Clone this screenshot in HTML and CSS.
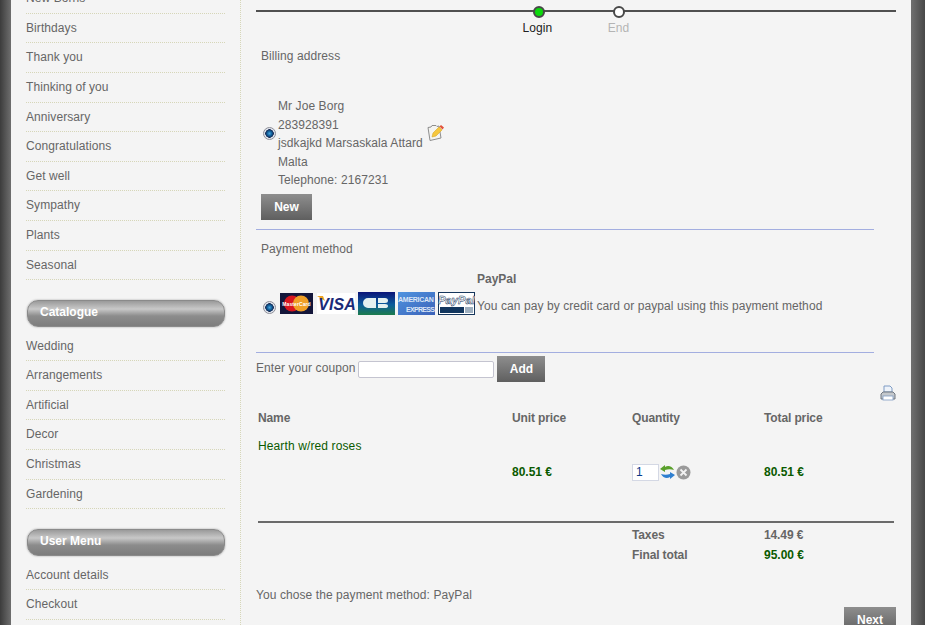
FILE: index.html
```html
<!DOCTYPE html>
<html lang="en">
<head>
<meta charset="UTF-8">
<meta name="viewport" content="width=device-width, initial-scale=1.0">
<title>Checkout</title>
<link rel="stylesheet" href="styles.css">
</head>
<body>

<div class="page">
  <div class="sidebar">
    <ul class="menu menu-first">
      <li>New Borns</li>
      <li>Birthdays</li>
      <li>Thank you</li>
      <li>Thinking of you</li>
      <li>Anniversary</li>
      <li>Congratulations</li>
      <li>Get well</li>
      <li>Sympathy</li>
      <li>Plants</li>
      <li>Seasonal</li>
    </ul>
    <div class="menu-title">Catalogue</div>
    <ul class="menu">
      <li>Wedding</li>
      <li>Arrangements</li>
      <li>Artificial</li>
      <li>Decor</li>
      <li>Christmas</li>
      <li>Gardening</li>
    </ul>
    <div class="menu-title">User Menu</div>
    <ul class="menu">
      <li>Account details</li>
      <li>Checkout</li>
    </ul>
  </div>

  <div class="main">
    <div class="steps">
      <div class="step step-done"><span class="dot"></span><span class="step-label">Login</span></div>
      <div class="step step-todo"><span class="dot"></span><span class="step-label">End</span></div>
    </div>

    <div class="section-title">Billing address</div>
    <div class="address-row">
      <span class="radio radio-address"></span>
      <div class="address">
        <div>Mr Joe Borg</div>
        <div>283928391</div>
        <div>jsdkajkd Marsaskala Attard</div>
        <div>Malta</div>
        <div>Telephone: 2167231</div>
      </div>
      <svg class="edit-icon" width="17" height="17" viewBox="0 0 17 17">
        <path d="M1 3.500l3-.5 1-1.500h4l1 1 2-.5 2 12-11 2.500z" fill="#f4f4f0" stroke="#8d8d8d"/>
        <path d="M5 13l1-4 6-6 3 3-6 6z" fill="#f6c73c" stroke="#d8a828" stroke-width=".6"/>
        <path d="M12.500 2.500l1.500-1.500 3 2.500-1.500 2z" fill="#e2533a"/>
      </svg>
    </div>
    <button class="btn btn-new">New</button>

    <div class="section-title section-payment">Payment method</div>
    <div class="payment-row">
      <span class="radio"></span>
      <div class="cards">
        <svg class="card card-first" width="33" height="21" viewBox="0 0 33 21">
          <rect width="33" height="21" fill="#14163a"/>
          <circle cx="12" cy="10.500" r="8" fill="#d8161f"/>
          <circle cx="21" cy="10.500" r="8" fill="#f0a026"/>
          <text x="16.500" y="12.500" class="card-mc">MasterCard</text>
        </svg>
        <svg class="card" width="38" height="21" viewBox="0 0 38 21">
          <rect width="38" height="21" fill="#fff"/>
          <path d="M0 3h6l2 5z" fill="#eea324"/>
          <text x="20" y="17" class="card-visa">VISA</text>
        </svg>
        <svg class="card" width="37" height="23" viewBox="0 0 37 23">
          <defs>
            <linearGradient id="cb-bg" x1="0" y1="0" x2="0" y2="1">
              <stop offset="0" stop-color="#0a1478"/>
              <stop offset=".55" stop-color="#0c5c9c"/>
              <stop offset="1" stop-color="#1c7c4c"/>
            </linearGradient>
          </defs>
          <rect width="37" height="23" fill="url(#cb-bg)"/>
          <path d="M18 6h-8a5 5 0 0 0 0 10h8zM20 6h7a3 2.500 0 0 1 0 5h-7zM20 12h7a3 2 0 0 1 0 4h-7z" fill="#e4f0f0"/>
        </svg>
        <svg class="card" width="37" height="23" viewBox="0 0 37 23">
          <defs>
            <linearGradient id="amex-bg" x1="0" y1="0" x2="1" y2="1">
              <stop offset="0" stop-color="#4f94e0"/>
              <stop offset="1" stop-color="#3c62b8"/>
            </linearGradient>
          </defs>
          <rect width="37" height="23" fill="url(#amex-bg)"/>
          <text x="0" y="10" class="card-amex" textLength="36">AMERICAN</text>
          <text x="8" y="20" class="card-amex" textLength="29">EXPRESS</text>
        </svg>
        <svg class="card" width="37" height="23" viewBox="0 0 37 23">
          <rect x=".5" y=".5" width="36" height="22" fill="#fff" stroke="#16365c"/>
          <text x="18.500" y="12" class="card-paypal">PayPal</text>
          <rect x="2" y="15" width="24" height="6" fill="#12365e"/>
          <rect x="27" y="15" width="8" height="6" fill="#9fb0c0"/>
        </svg>
      </div>
      <div class="payment-text">
        <div class="payment-name">PayPal</div>
        <div class="payment-desc">You can pay by credit card or paypal using this payment method</div>
      </div>
    </div>

    <form class="coupon">
      <label class="coupon-label" for="coupon">Enter your coupon</label>
      <input class="coupon-input" id="coupon" type="text">
      <button class="btn btn-add" type="button">Add</button>
    </form>

    <div class="print-row">
      <svg width="16" height="16" viewBox="0 0 16 16">
        <path d="M4 7V1h6l2 2v4z" fill="#eef3fa" stroke="#7f9cc4"/>
        <path d="M1 14V9l2-2h10l2 2v5z" fill="#c4c8cc" stroke="#6f7680"/>
        <rect x="3" y="11" width="10" height="4" fill="#fff" stroke="#7f9cc4" stroke-width=".8"/>
      </svg>
    </div>

    <div class="cart">
      <div class="cart-row cart-head">
        <div>Name</div>
        <div>Unit price</div>
        <div>Quantity</div>
        <div>Total price</div>
      </div>
      <div class="product-name">Hearth w/red roses</div>
      <div class="cart-row cart-item">
        <div></div>
        <div class="price">80.51 €</div>
        <div class="qty">
          <input class="qty-input" type="text" value="1">
          <svg width="15" height="16" viewBox="0 0 15 16">
            <path d="M14 6C12 2 8 1 5 3V1L0 5l5 3V6c3-1 6-1 9 0z" fill="#5aa02c"/>
            <path d="M1 10c2 4 6 5 9 3v2l5-4-5-3v2c-3 1-6 1-9 0z" fill="#2f7fd0"/>
          </svg>
          <svg width="15" height="15" viewBox="0 0 15 15">
            <circle cx="7.500" cy="7.500" r="7" fill="#9a9a9a"/>
            <path d="M4.500 4.500l6 6M10.500 4.500l-6 6" stroke="#f2f2f2" stroke-width="1.800"/>
          </svg>
        </div>
        <div class="price">80.51 €</div>
      </div>
      <div class="cart-totals">
        <div class="cart-row total-row">
          <div></div>
          <div></div>
          <div class="total-label">Taxes</div>
          <div class="total-label">14.49 €</div>
        </div>
        <div class="cart-row total-row">
          <div></div>
          <div></div>
          <div class="total-label">Final total</div>
          <div class="price">95.00 €</div>
        </div>
      </div>
    </div>

    <div class="chosen">You chose the payment method: PayPal</div>
    <div class="next-row"><button class="btn btn-next">Next</button></div>
  </div>
</div>

</body>
</html>
```

FILE: styles.css
```css
html, body {
  margin: 0;
  height: 625px;
  overflow: hidden;
}

body {
  background: linear-gradient(to right, #3c3c3c 0, #6e6e6e 11px, #6e6e6e 911px, #6e6e6e 912px, #484848 925px);
  font-family: "Liberation Sans", Arial, sans-serif;
  font-size: 12px;
  letter-spacing: .08px;
  color: #666;
}

.page {
  display: flex;
  width: 900px;
  height: 625px;
  margin-left: 11px;
  background: #f4f4f4;
  overflow: hidden;
}

/* left column */
.sidebar {
  width: 230px;
  height: 625px;
  flex: none;
  padding-left: 15px;
  box-sizing: border-box;
  border-right: 1px dotted #d6d6b8;
  overflow: hidden;
}

.menu {
  list-style: none;
  margin: 0;
  padding: 0;
  width: 199px;
}

.menu-first {
  margin-top: -15.800px;
}

.menu li {
  height: 28.600px;
  line-height: 29px;
  border-bottom: 1px dotted #d6d6b8;
}

.menu-title {
  width: 198px;
  height: 27px;
  margin: 20px 0 4.500px 1px;
  padding-left: 12px;
  box-sizing: border-box;
  border: 1px solid #8a8a8a;
  border-radius: 11px;
  background: linear-gradient(to bottom, #9a9a9a 0, #c8c8c8 8px, #8c8c8c 15px, #7d7d7d 100%);
  box-shadow: 0 0 2px #999;
  font-weight: bold;
  line-height: 22px;
  letter-spacing: 0;
  color: #fff;
}

/* right column */
.main {
  width: 640px;
  margin-left: 15px;
  flex: none;
}

.steps {
  display: flex;
  height: 49px;
  padding-left: 241px;
  box-sizing: border-box;
  background: linear-gradient(#505050, #505050) 0 10px / 100% 2px no-repeat;
}

.step {
  width: 81px;
  display: flex;
  flex-direction: column;
  align-items: center;
  padding-top: 6px;
  box-sizing: border-box;
}

.dot {
  width: 8px;
  height: 8px;
  border: 2px solid #484848;
  border-radius: 50%;
}

.step-done .dot {
  margin-left: 3px;
  background: #0cd80c;
}

.step-todo .dot {
  background: #fff;
}

.step-label {
  margin-top: 3px;
  line-height: 15px;
}

.step-done .step-label {
  color: #222;
}

.step-todo .step-label {
  color: #b4b4b4;
}

.section-title {
  margin-left: 5px;
  line-height: 14px;
}

.address-row {
  display: flex;
  align-items: center;
  margin: 34px 0 0 7px;
}

.radio {
  width: 11px;
  height: 11px;
  flex: none;
  border: 1px solid #8f8f98;
  border-radius: 50%;
  background: radial-gradient(circle, #4aa4e0 0, #0c5a94 2.500px, #1c2c54 4px, #e0e6ee 4.500px, #e0e6ee 100%);
}

.radio-address {
  margin-bottom: 20px;
}

.address {
  margin-left: 2px;
  line-height: 18.500px;
}

.edit-icon {
  margin: 0 0 22px 4px;
}

.btn {
  border: 0;
  padding: 0;
  background: linear-gradient(to bottom, #8e8e8e, #5f5f5f);
  font-family: "Liberation Sans", Arial, sans-serif;
  font-size: 12px;
  font-weight: bold;
  color: #fff;
}

.btn-new {
  display: block;
  width: 51px;
  height: 26px;
  margin: 4.500px 0 0 5px;
}

.section-payment {
  width: 618px;
  margin-left: 0;
  margin-top: 9px;
  padding: 12px 0 0 5px;
  box-sizing: border-box;
  height: 27px;
  border-top: 1px solid #a3aee0;
}

.payment-row {
  display: flex;
  align-items: center;
  height: 84px;
  margin: 0 0 0 7px;
  padding-top: 18px;
  box-sizing: border-box;
}

.cards {
  display: flex;
  align-items: center;
  gap: 3px;
  margin: -8px 2px 0 4px;
}

.card {
  display: block;
}

.card-first {
  margin-right: 1px;
}

.card-mc {
  font-size: 5px;
  font-weight: bold;
  font-family: "Liberation Sans", Arial, sans-serif;
  fill: #fff;
  text-anchor: middle;
}

.card-visa {
  font-size: 16px;
  font-weight: bold;
  font-style: italic;
  font-family: "Liberation Sans", Arial, sans-serif;
  fill: #1a2a78;
  text-anchor: middle;
}

.card-amex {
  font-size: 7px;
  font-weight: bold;
  font-family: "Liberation Sans", Arial, sans-serif;
  fill: #dbe6f6;
}

.card-paypal {
  font-size: 11px;
  font-weight: bold;
  font-style: italic;
  font-family: "Liberation Sans", Arial, sans-serif;
  fill: #fff;
  stroke: #16365c;
  stroke-width: .5px;
  text-anchor: middle;
}

.payment-text {
  margin-top: -29px;
}

.payment-name {
  font-weight: bold;
  line-height: 14px;
  letter-spacing: 0;
  margin-bottom: 13px;
}

.payment-desc {
  line-height: 14px;
}

.coupon {
  display: flex;
  align-items: center;
  width: 618px;
  height: 34px;
  margin: 12px 0 0;
  box-sizing: border-box;
  border-top: 1px solid #a3aee0;
}

.coupon-label {
  margin: -3px 3px 0 0;
}

.coupon-input {
  width: 136px;
  height: 17px;
  padding: 0;
  box-sizing: border-box;
  border: 1px solid #c4c4d0;
  border-radius: 2px;
  background: #fff;
}

.btn-add {
  width: 48px;
  height: 26px;
  margin: -2px 0 0 3px;
}

.print-row {
  display: flex;
  justify-content: flex-end;
  height: 16px;
  margin-top: -1px;
}

.cart {
  width: 636px;
  margin-left: 2px;
}

.cart-row {
  display: grid;
  grid-template-columns: 254px 120px 132px 1fr;
}

.cart-head {
  margin-top: 10px;
  line-height: 14px;
  font-weight: bold;
  letter-spacing: -.12px;
}

.product-name {
  margin-top: 14px;
  line-height: 14px;
  letter-spacing: .12px;
  color: #0a5a00;
}

.cart-item {
  align-items: center;
  height: 26px;
  margin-top: 6px;
}

.price {
  font-weight: bold;
  letter-spacing: 0;
  color: #0a5a00;
}

.qty {
  display: flex;
  align-items: center;
  gap: 1px;
}

.qty-input {
  width: 27px;
  height: 17px;
  padding: 0 0 0 3px;
  box-sizing: border-box;
  border: 1px solid #d4d8e4;
  background: #fff;
  font-family: "Liberation Sans", Arial, sans-serif;
  font-size: 12px;
  color: #0a3a8a;
}

.cart-totals {
  margin-top: 36px;
  padding-top: 5px;
  border-top: 2px solid #6a6a6a;
}

.total-row {
  height: 20px;
  line-height: 15px;
}

.total-label {
  font-weight: bold;
  letter-spacing: -.12px;
}

.chosen {
  margin-top: 20px;
  line-height: 14px;
}

.next-row {
  display: flex;
  justify-content: flex-end;
  margin-top: 5px;
}

.btn-next {
  width: 52px;
  height: 26px;
}
```
